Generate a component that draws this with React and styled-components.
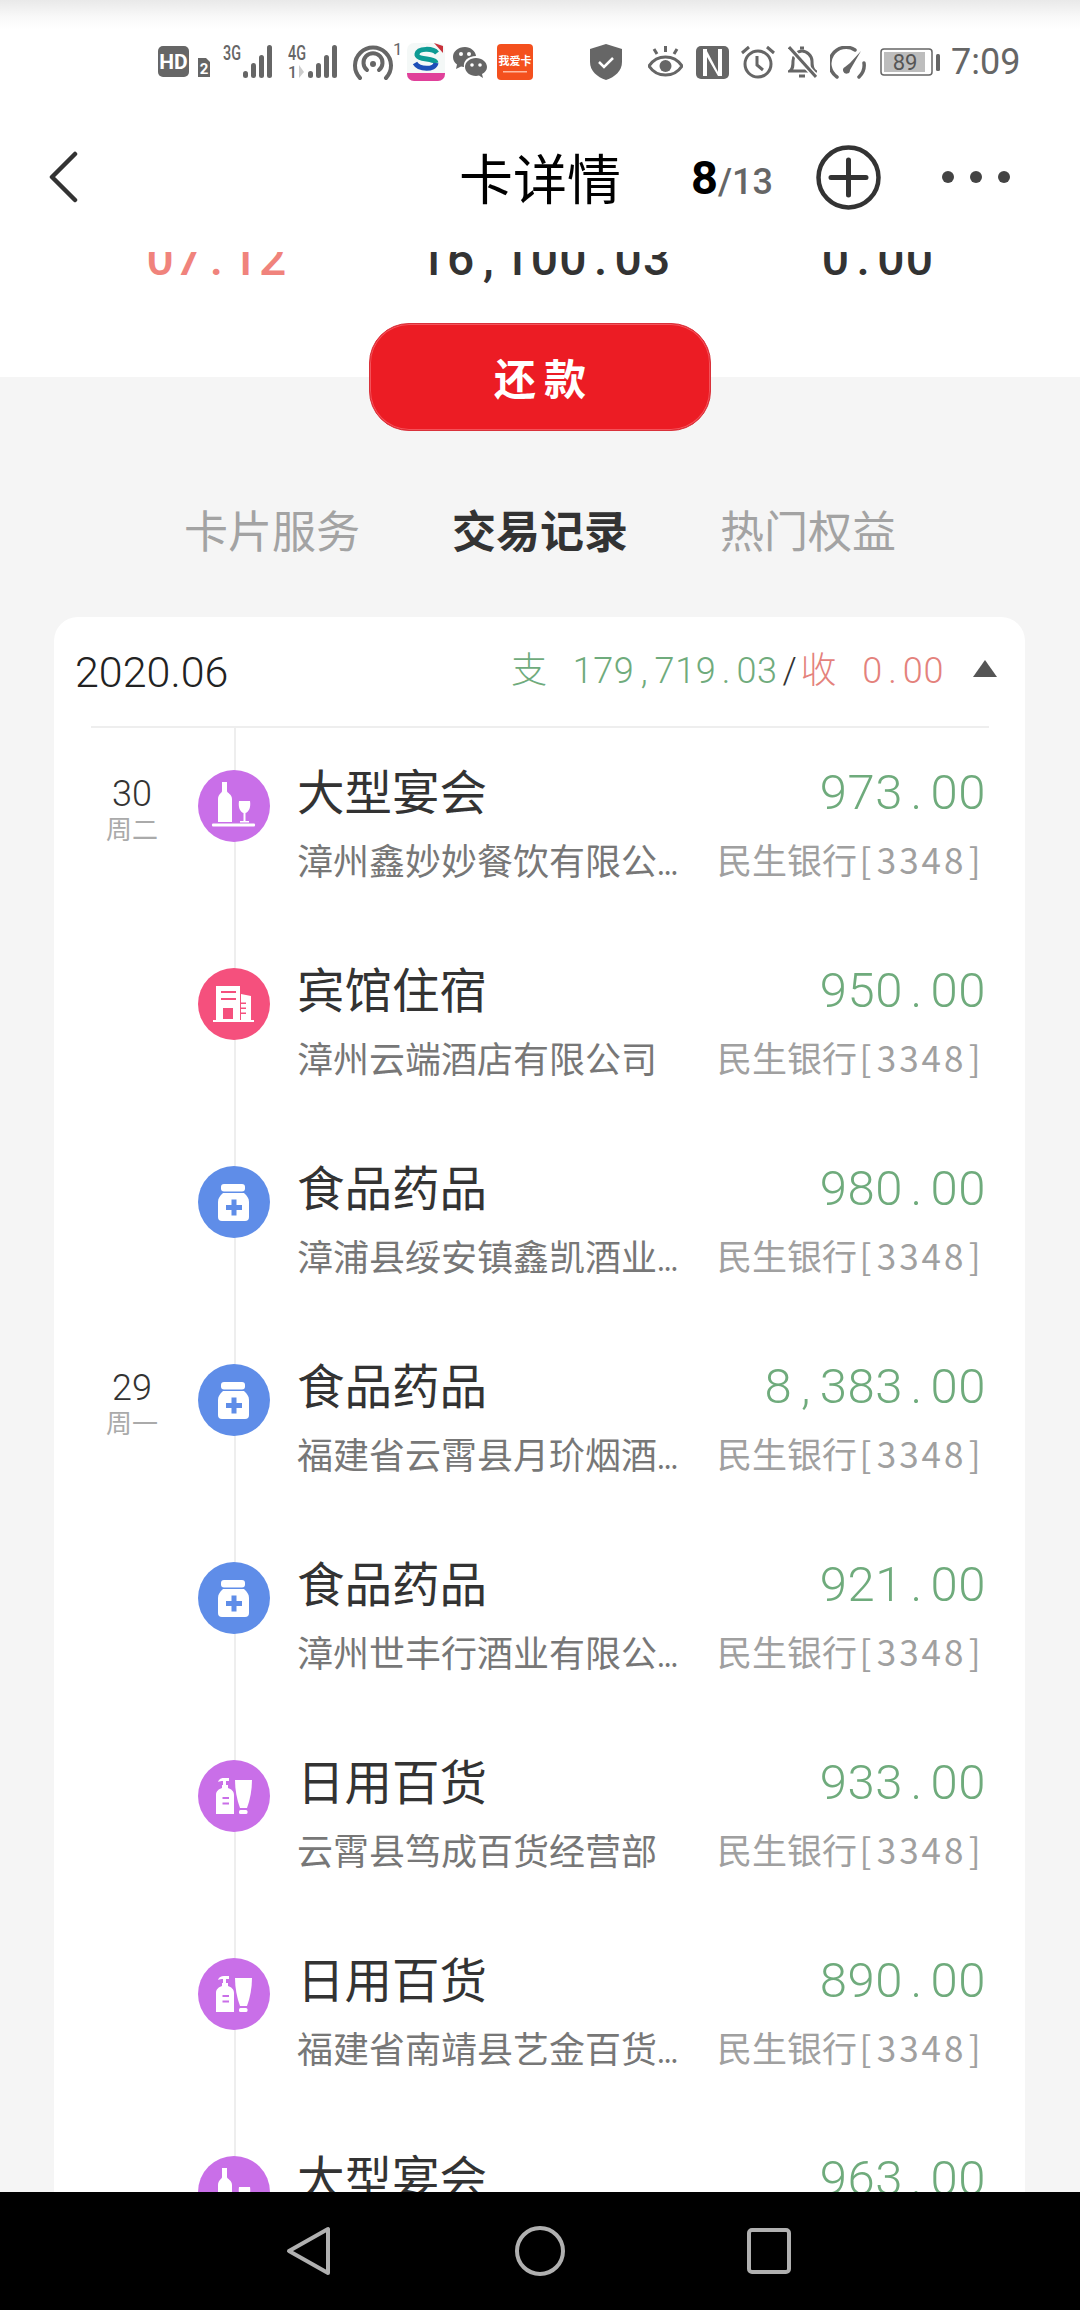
import React from "react";
import styled, { createGlobalStyle } from "styled-components";

const CJK = `"Noto Sans CJK SC", "Noto Sans", sans-serif`;
const NUM = `Roboto, "Noto Sans CJK SC", sans-serif`;

const GlobalStyle = createGlobalStyle`
  html, body { margin: 0; padding: 0; background: #fff; }
  * { box-sizing: border-box; }
`;

const Page = styled.div`
  width: 1080px;
  height: 2310px;
  display: flex;
  flex-direction: column;
  overflow: hidden;
  background: #f5f5f5;
  font-family: ${CJK};
`;

const StatusBar = styled.div`
  height: 92px;
  flex: none;
  display: flex;
  align-items: center;
  padding: 32px 0 0 158px;
  background: linear-gradient(#e9e9e9 0, #f8f8f8 16px, #fff 30px);
`;

const StatusItem = styled.svg`
  flex: none;
  display: block;
  margin-left: ${(p) => p.$gap || 0}px;
  color: #666;
`;

const Clock = styled.span`
  margin-left: 11px;
  font: 400 36px/1 ${NUM};
  color: #666;
`;

const Header = styled.header`
  height: 160px;
  flex: none;
  padding-top: 10px;
  display: grid;
  grid-template-columns: 1fr auto 1fr;
  align-items: center;
  background: #fff;
`;

const BackButton = styled.div`
  padding-left: 47px;
  display: flex;
  color: #333;
`;

const Title = styled.h1`
  margin: 0;
  font: 400 54px/1 ${CJK};
  color: #000;
`;

const HeaderRight = styled.div`
  display: flex;
  align-items: center;
  padding-left: 70px;
`;

const Pager = styled.div`
  width: 125px;
  display: flex;
  align-items: baseline;
  font: 500 36px/1 ${NUM};
  color: #666;
  b {
    font-size: 47px;
    font-weight: 700;
    color: #000;
  }
`;

const Dots = styled.div`
  margin-left: 61px;
  display: flex;
  gap: 16px;
  i {
    width: 12px;
    height: 12px;
    border-radius: 50%;
    background: #444;
  }
`;

const Summary = styled.section`
  height: 125px;
  flex: none;
  display: flex;
  flex-direction: column;
  align-items: center;
  background: #fff;
`;

const StatRow = styled.div`
  width: 100%;
  height: 71px;
  flex: none;
  overflow: hidden;
  display: grid;
  grid-template-columns: 434px 222px 1fr;
`;

const StatValue = styled.div`
  margin-top: -18px;
  padding-left: ${(p) => p.$shift || 0}px;
  display: flex;
  justify-content: center;
  white-space: nowrap;
  font: 500 48px/50px ${NUM};
  letter-spacing: 1.2px;
  color: ${(p) => p.$color || "#333"};
`;

const RepayButton = styled.button`
  position: relative;
  z-index: 1;
  width: 342px;
  height: 108px;
  flex: none;
  padding: 0 0 0 8px;
  border: 1px solid #d9313a;
  border-radius: 40px;
  background: #ec1c24;
  box-shadow: inset 0 0 0 1px #f4525a;
  font: 700 42px/1 ${CJK};
  letter-spacing: 8px;
  color: #fff;
`;

const Tabs = styled.nav`
  height: 240px;
  flex: none;
  padding-top: 64px;
  display: flex;
  align-items: center;
  justify-content: center;
  gap: 92px;
`;

const Tab = styled.span`
  font: ${(p) => (p.$active ? 700 : 400)} 44px/1 ${CJK};
  color: ${(p) => (p.$active ? "#333" : "#a3a3a3")};
`;

const Card = styled.section`
  margin: 0 55px 0 54px;
  flex: 1;
  min-height: 0;
  border-radius: 24px 24px 0 0;
  background: #fff;
  overflow: hidden;
`;

const MonthBar = styled.div`
  height: 109px;
  padding: 0 28px 0 21px;
  display: flex;
  align-items: center;
`;

const Month = styled.span`
  padding-top: 2px;
  font: 300 43px/1 ${NUM};
  color: #222;
`;

const Totals = styled.div`
  margin-left: auto;
  padding-bottom: 6px;
  display: flex;
  align-items: baseline;
  font: 300 36px/1 ${NUM};
  letter-spacing: 0.6px;
`;

const Spend = styled.span`
  color: #6fab7c;
`;

const Income = styled.span`
  color: #e4827c;
`;

const Slash = styled.span`
  margin: 0 3px 0 5px;
  color: #333;
`;

const Label = styled.span`
  margin-right: 25px;
  font-family: ${CJK};
`;

const Caret = styled.i`
  margin-left: 29px;
  width: 0;
  height: 0;
  align-self: center;
  border-left: 12px solid transparent;
  border-right: 12px solid transparent;
  border-bottom: 17px solid #555;
`;

const Divider = styled.div`
  height: 2px;
  margin: 0 36px 0 37px;
  background: #eee;
`;

const List = styled.div`
  position: relative;
  padding: 32px 39px 0 37px;
  &::before {
    content: "";
    position: absolute;
    top: 0;
    bottom: 0;
    left: 180px;
    width: 2px;
    background: #eee;
  }
`;

const Row = styled.div`
  position: relative;
  height: 198px;
  padding-top: 5px;
  display: grid;
  grid-template-columns: 82px 72px 1fr;
  column-gap: 25px;
  align-items: start;
`;

const DateCell = styled.div`
  padding-top: 11px;
  text-align: center;
`;

const Day = styled.div`
  font: 300 36px/36px ${NUM};
  color: #333;
`;

const Week = styled.div`
  font: 400 26px/32px ${CJK};
  color: #aaa;
`;

const Badge = styled.div`
  width: 72px;
  height: 72px;
  margin-top: 5px;
  border-radius: 50%;
  background: ${(p) => p.$color};
  svg {
    display: block;
  }
`;

const Info = styled.div`
  min-width: 0;
  margin-left: 2px;
`;

const Line = styled.div`
  display: flex;
  justify-content: space-between;
  align-items: flex-start;
`;

const Category = styled.span`
  font: 400 47.5px/50px ${CJK};
  color: #333;
`;

const Amount = styled.span`
  font: 300 49px/56px ${NUM};
  letter-spacing: 0.6px;
  color: #6fab7c;
`;

const SubLine = styled(Line)`
  margin-top: 15px;
`;

const Merchant = styled.span`
  white-space: nowrap;
  font: 400 36px/46px ${CJK};
  color: #777;
`;

const Cut = styled.span`
  font-size: 28px;
  letter-spacing: -1px;
`;

const Account = styled.span`
  font: 400 35px/46px ${CJK};
  color: #a0a0a0;
`;

const CardNumber = styled.span`
  letter-spacing: 3px;
`;

// the source font is monospaced: punctuation takes a full digit cell
const Cell = styled.span`
  display: inline-block;
  width: 0.56em;
  text-align: center;
`;

const Mono = ({ children }) =>
  children.split(/([.,[\]])/).map((part, i) => (i % 2 ? <Cell key={i}>{part}</Cell> : part));

const NavBar = styled.div`
  height: 118px;
  flex: none;
  position: relative;
  z-index: 2;
  display: flex;
  align-items: center;
  padding-left: 285px;
  background: #000;
  color: #b0b0b0;
`;

const NavIcon = styled.svg`
  display: block;
  margin-left: ${(p) => p.$gap || 0}px;
`;

const Bars = ({ x = 0 }) => (
  <g fill="currentColor">
    <rect x={x} y="26" width="5" height="7" rx="2.5" />
    <rect x={x + 8} y="18" width="5" height="15" rx="2.5" />
    <rect x={x + 16} y="10" width="5" height="23" rx="2.5" />
    <rect x={x + 24} y="0" width="5" height="33" rx="2.5" />
  </g>
);

const StatusIcons = () => (
  <>
    <StatusItem width="52" height="34" viewBox="0 0 52 34">
      <rect y="1" width="31" height="31" rx="5" fill="currentColor" />
      <text x="15.5" y="24" textAnchor="middle" fill="#fff" fontSize="21" fontWeight="700" fontFamily="Roboto">HD</text>
      <path d="M40 13h8l4 4v15H40z" fill="currentColor" />
      <text x="46" y="29" textAnchor="middle" fill="#fff" fontSize="15" fontWeight="700" fontFamily="Roboto">2</text>
    </StatusItem>
    <StatusItem $gap={13} width="53" height="34" viewBox="0 0 53 34">
      <text x="0" y="15" fontSize="20" fontWeight="500" fontFamily="Roboto" fill="currentColor" textLength="18" lengthAdjust="spacingAndGlyphs">3G</text>
      <Bars x={20} />
    </StatusItem>
    <StatusItem $gap={12} width="53" height="34" viewBox="0 0 53 34">
      <text x="0" y="15" fontSize="20" fontWeight="500" fontFamily="Roboto" fill="currentColor" textLength="18" lengthAdjust="spacingAndGlyphs">4G</text>
      <text x="0" y="33" fontSize="16" fontWeight="500" fontFamily="Roboto" fill="currentColor">1</text>
      <path d="M11 20v13l5-6z" fill="#ccc" />
      <Bars x={20} />
    </StatusItem>
    <StatusItem $gap={12} width="47" height="40" viewBox="0 0 47 40">
      <path d="M7 36A18 18 0 1 1 33 36" fill="none" stroke="currentColor" strokeWidth="4" strokeLinecap="round" />
      <path d="M14 28a9.500 9.500 0 1 1 12 0" fill="none" stroke="currentColor" strokeWidth="4" strokeLinecap="round" />
      <circle cx="20" cy="22" r="3" fill="currentColor" />
      <text x="40" y="13" fontSize="17" fontFamily="Roboto" fill="currentColor">1</text>
    </StatusItem>
    <StatusItem $gap={7} width="38" height="38" viewBox="0 0 38 38">
      <rect width="38" height="38" rx="7" fill="#f4f8f7" />
      <path d="M0 30h38v1a7 7 0 0 1-7 7H7a7 7 0 0 1-7-7z" fill="#e0409a" />
      <path d="M30 10C26 5 11 5 10 11s18 4 19 9" fill="none" stroke="#0d9b94" strokeWidth="5" />
      <path d="M8 20c4 7 20 7 21 0" fill="none" stroke="#1d4fb8" strokeWidth="5" />
      <path d="M27 0l9 3v7z" fill="#c8313a" />
    </StatusItem>
    <StatusItem $gap={8} width="34" height="33" viewBox="0 0 34 33">
      <path d="M12 1C5 1 0 5.500 0 11c0 3 1.500 5.500 4 7.500L3 23l5-2.500c1 .3 2 .5 3 .5-1-6 4-11 12-11-.5-5-5.500-9-11-9z" fill="currentColor" />
      <path d="M23 12c-6 0-11 4-11 9s5 9 11 9c1 0 2-.2 3-.5l4 2.500-1-4c3-1.500 5-4 5-7 0-5-5-9-11-9z" fill="currentColor" />
      <circle cx="19" cy="19" r="1.800" fill="#fff" />
      <circle cx="27" cy="19" r="1.800" fill="#fff" />
      <circle cx="8" cy="8" r="2" fill="#fff" />
      <circle cx="16" cy="8" r="2" fill="#fff" />
    </StatusItem>
    <StatusItem $gap={10} width="36" height="36" viewBox="0 0 36 36">
      <rect width="36" height="36" rx="4" fill="#f4501e" />
      <text x="18" y="21" textAnchor="middle" fontSize="11" fontWeight="700" fill="#fff" fontFamily="Noto Sans CJK SC">我爱卡</text>
      <rect x="6" y="27" width="24" height="1.500" fill="#ffb9a0" />
    </StatusItem>
    <StatusItem $gap={57} width="32" height="36" viewBox="0 0 32 36">
      <path d="M16 0l16 5v13c0 9-7 15-16 18C7 33 0 27 0 18V5z" fill="currentColor" />
      <path d="M9 18l5 5 9-9" fill="none" stroke="#fff" strokeWidth="2.500" />
    </StatusItem>
    <StatusItem $gap={26} width="35" height="32" viewBox="0 0 35 32">
      <path d="M1 20c4-6 9-9 16.500-9S30 14 34 20c-4 6-9 9-16.500 9S5 26 1 20z" fill="none" stroke="currentColor" strokeWidth="3" />
      <circle cx="17.500" cy="20" r="6" fill="currentColor" />
      <path d="M17.500 0v6M6 3l3 5M29 3l-3 5" stroke="currentColor" strokeWidth="3" />
    </StatusItem>
    <StatusItem $gap={13} width="33" height="33" viewBox="0 0 33 33">
      <rect width="33" height="33" rx="5" fill="currentColor" />
      <path d="M7 3v27h4V11l11 19h4V3h-4v19L11 3z" fill="#fff" />
      <path d="M11 5l11 21V5L11 3z" fill="currentColor" />
    </StatusItem>
    <StatusItem $gap={12} width="34" height="34" viewBox="0 0 34 34">
      <circle cx="17" cy="19" r="13" fill="none" stroke="currentColor" strokeWidth="3" />
      <path d="M16 11v9l6 5" fill="none" stroke="currentColor" strokeWidth="3" />
      <path d="M1 8l7-6M33 8l-7-6" stroke="currentColor" strokeWidth="3" />
    </StatusItem>
    <StatusItem $gap={13} width="29" height="34" viewBox="0 0 29 34">
      <path d="M2 26c3-2 3-5 3-10 0-5 4-10 9-10s10 5 10 10c0 5 0 8 3 10z" fill="none" stroke="currentColor" strokeWidth="3" />
      <path d="M12 3h4M11 31h6" stroke="currentColor" strokeWidth="3" />
      <path d="M1 2l27 30" stroke="#fff" strokeWidth="6" />
      <path d="M1 2l27 30" stroke="currentColor" strokeWidth="3" />
    </StatusItem>
    <StatusItem $gap={13} width="36" height="33" viewBox="0 0 36 33">
      <path d="M7 31A16 16 0 0 1 25 4" fill="none" stroke="currentColor" strokeWidth="3.500" strokeLinecap="round" />
      <path d="M29 31a16 16 0 0 0 5-14" fill="none" stroke="currentColor" strokeWidth="3.500" strokeLinecap="round" />
      <path d="M31 5L20 17l-5 4a3.500 3.500 0 1 0 5 3z" fill="currentColor" />
    </StatusItem>
    <StatusItem $gap={14} width="60" height="28" viewBox="0 0 60 28">
      <rect x="1" y="1" width="51" height="26" rx="3" fill="none" stroke="currentColor" strokeWidth="1.500" />
      <rect x="4" y="4" width="41" height="20" fill="#bdbdbd" />
      <text x="25" y="22" textAnchor="middle" fontSize="22" fontFamily="Roboto" fill="#555">89</text>
      <rect x="56" y="6" width="4" height="17" rx="1.500" fill="currentColor" />
    </StatusItem>
    <Clock>7:09</Clock>
  </>
);

const BanquetGlyph = () => (
  <svg width="72" height="72" viewBox="0 0 72 72" fill="#fff">
    <path d="M24 12h5v9c0 2 5 3 5 8v23H20V29c0-5 4-6 4-8z" />
    <path d="M41 31h11c1 6-1 11-4.500 12v8H51v1.500H42V51h3.500v-8C42 42 40 37 41 31z" />
    <rect x="14" y="53.500" width="43" height="3" rx="1" />
  </svg>
);

const HotelGlyph = () => (
  <svg width="72" height="72" viewBox="0 0 72 72" fill="#fff">
    <path fillRule="evenodd" d="M18 18h24v34H18zM23 23v2h15v-2zM23 30v2h15v-2zM25 40v11h10V40z" />
    <path fillRule="evenodd" d="M43 26l10 2v24H43v-6h5v-1.500h-5V41h5v-1.500h-5V36h5v-1.500h-5z" />
    <rect x="15" y="52" width="41" height="2" />
  </svg>
);

const MedicineGlyph = ({ color }) => (
  <svg width="72" height="72" viewBox="0 0 72 72">
    <rect x="23" y="18" width="24" height="7.500" rx="3" fill="#fff" />
    <path d="M25 27h21c3 3 5 5 5 9v15a4 4 0 0 1-4 4H24a4 4 0 0 1-4-4V36c0-4 2-6 5-9z" fill="#fff" />
    <path d="M33.500 33.500h5v5.500H44v5h-5.500v5.500h-5V44H28v-5h5.500z" fill={color} />
  </svg>
);

const LotionGlyph = ({ color }) => (
  <svg width="72" height="72" viewBox="0 0 72 72" fill="#fff">
    <path d="M20 22c1-3 3-4 6-4h5v3h-3v4h2v3c3 1 6 3 6 7v19H18V35c0-4 3-6 6-7v-3h1v-4c-2 0-3 0-5 1z" />
    <rect x="24.500" y="37" width="6.500" height="2" fill={color} />
    <rect x="24.500" y="42.500" width="6.500" height="2" fill={color} />
    <path d="M37 20h17c0 10-2 20-5 28h-7c-3-8-5-18-5-28z" />
    <rect x="41" y="50" width="8.500" height="4" rx="1.500" />
  </svg>
);

const PURPLE = "#c96fe8";
const PINK = "#f5507d";
const BLUE = "#5f8de8";

const transactions = [
  { day: "30", week: "周二", glyph: "banquet", category: "大型宴会", merchant: "漳州鑫妙妙餐饮有限公", cut: true, amount: "973.00" },
  { glyph: "hotel", category: "宾馆住宿", merchant: "漳州云端酒店有限公司", amount: "950.00" },
  { glyph: "medicine", category: "食品药品", merchant: "漳浦县绥安镇鑫凯酒业", cut: true, amount: "980.00" },
  { day: "29", week: "周一", glyph: "medicine", category: "食品药品", merchant: "福建省云霄县月玠烟酒", cut: true, amount: "8,383.00" },
  { glyph: "medicine", category: "食品药品", merchant: "漳州世丰行酒业有限公", cut: true, amount: "921.00" },
  { glyph: "lotion", category: "日用百货", merchant: "云霄县笃成百货经营部", amount: "933.00" },
  { glyph: "lotion", category: "日用百货", merchant: "福建省南靖县艺金百货", cut: true, amount: "890.00" },
  { glyph: "banquet", category: "大型宴会", merchant: "漳州鑫妙妙餐饮有限公", cut: true, amount: "963.00" },
];

const glyphs = {
  banquet: { color: PURPLE, render: () => <BanquetGlyph /> },
  hotel: { color: PINK, render: () => <HotelGlyph /> },
  medicine: { color: BLUE, render: () => <MedicineGlyph color={BLUE} /> },
  lotion: { color: PURPLE, render: () => <LotionGlyph color={PURPLE} /> },
};

const TransactionRow = ({ day, week, glyph, category, merchant, cut, amount }) => (
  <Row>
    <DateCell>
      {day && <Day>{day}</Day>}
      {week && <Week>{week}</Week>}
    </DateCell>
    <Badge $color={glyphs[glyph].color}>{glyphs[glyph].render()}</Badge>
    <Info>
      <Line>
        <Category>{category}</Category>
        <Amount>
          <Mono>{amount}</Mono>
        </Amount>
      </Line>
      <SubLine>
        <Merchant>
          {merchant}
          {cut && <Cut>...</Cut>}
        </Merchant>
        <Account>
          民生银行
          <CardNumber>
            <Mono>[3348]</Mono>
          </CardNumber>
        </Account>
      </SubLine>
    </Info>
  </Row>
);

export default function App() {
  return (
    <Page>
      <GlobalStyle />
      <StatusBar>
        <StatusIcons />
      </StatusBar>
      <Header>
        <BackButton>
          <svg width="32" height="52" viewBox="0 0 32 52" fill="none" stroke="currentColor" strokeWidth="4.500" strokeLinecap="round" strokeLinejoin="round">
            <path d="M28 3L5 26l23 23" />
          </svg>
        </BackButton>
        <Title>卡详情</Title>
        <HeaderRight>
          <Pager>
            <b>8</b>/13
          </Pager>
          <svg width="65" height="65" viewBox="0 0 65 65" fill="none" stroke="#333" strokeWidth="4.500">
            <circle cx="32.500" cy="32.500" r="30" />
            <path d="M15 32.500h35M32.500 15v35" strokeWidth="5" strokeLinecap="round" />
          </svg>
          <Dots>
            <i />
            <i />
            <i />
          </Dots>
        </HeaderRight>
      </Header>
      <Summary>
        <StatRow>
          <StatValue $color="#f0837c">
            <span>
              <Mono>07.12</Mono>
            </span>
          </StatValue>
          <StatValue>
            <span>
              <Mono>16,100.03</Mono>
            </span>
          </StatValue>
          <StatValue $shift={20}>
            <span>
              <Mono>0.00</Mono>
            </span>
          </StatValue>
        </StatRow>
        <RepayButton>还款</RepayButton>
      </Summary>
      <Tabs>
        <Tab>卡片服务</Tab>
        <Tab $active>交易记录</Tab>
        <Tab>热门权益</Tab>
      </Tabs>
      <Card>
        <MonthBar>
          <Month>2020.06</Month>
          <Totals>
            <Spend>
              <Label>支</Label>
              <Mono>179,719.03</Mono>
            </Spend>
            <Slash>/</Slash>
            <Income>
              <Label>收</Label>
              <Mono>0.00</Mono>
            </Income>
            <Caret />
          </Totals>
        </MonthBar>
        <Divider />
        <List>
          {transactions.map((t, i) => (
            <TransactionRow key={i} {...t} />
          ))}
        </List>
      </Card>
      <NavBar>
        <NavIcon width="46" height="50" viewBox="0 0 46 50" fill="none" stroke="currentColor" strokeWidth="4" strokeLinejoin="round">
          <path d="M43 3v44L4 25z" />
        </NavIcon>
        <NavIcon $gap={184} width="50" height="50" viewBox="0 0 50 50" fill="none" stroke="currentColor" strokeWidth="4">
          <circle cx="25" cy="25" r="23" />
        </NavIcon>
        <NavIcon $gap={182} width="44" height="46" viewBox="0 0 44 46" fill="none" stroke="currentColor" strokeWidth="4">
          <rect x="2" y="2" width="40" height="42" rx="3" />
        </NavIcon>
      </NavBar>
    </Page>
  );
}
